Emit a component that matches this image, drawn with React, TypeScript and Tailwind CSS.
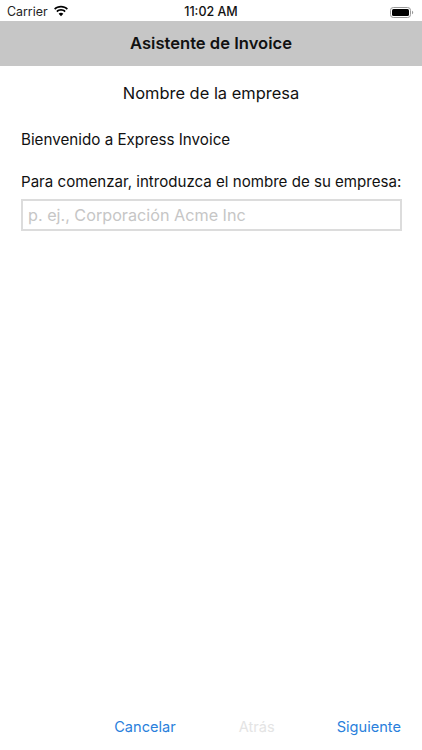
export default function App() {
  return (
    <div className="w-[422px] h-[750px] bg-white flex flex-col overflow-hidden text-black font-['Inter','Liberation_Sans',sans-serif]">
      <div className="h-[21px] pt-[3px] flex items-center justify-between pl-[7px] pr-[8px] relative">
        <div className="flex items-center gap-[5px]">
          <span className="text-[12.4px] leading-none text-[#222]">Carrier</span>
          <svg width="16" height="12" viewBox="0 0 15 11" className="mb-[3px]">
            <path d="M7.5 2.2c2.1 0 4 .8 5.4 2.1l1.1-1.2C12.3 1.500 10 .5 7.500 .5S2.700 1.500 1 3.100l1.100 1.200C3.500 3 5.400 2.200 7.500 2.200z" fill="#000" />
            <path d="M7.500 5.300c1.300 0 2.400.5 3.300 1.300l1.100-1.200C10.700 4.300 9.200 3.600 7.500 3.600S4.300 4.300 3.100 5.400l1.100 1.200c.9-.8 2-1.300 3.300-1.300z" fill="#000" />
            <path d="M7.500 10.500L9.700 8.100c-.6-.5-1.400-.9-2.200-.9s-1.600.3-2.200.9z" fill="#000" />
          </svg>
        </div>
        <span className="absolute left-0 right-0 text-center text-[12.5px] leading-none font-medium text-[#111]">11:02 AM</span>
        <svg width="24" height="11" viewBox="0 0 24 11">
          <rect x="0.500" y="0.500" width="20" height="10" rx="2.800" fill="none" stroke="#999" />
          <rect x="2" y="2" width="17" height="7" rx="1.500" fill="#000" />
          <path d="M22 3.800c.7.200 1.200.9 1.200 1.700s-.5 1.500-1.200 1.700z" fill="#999" />
        </svg>
      </div>
      <div className="h-[45px] bg-[#c6c6c6] flex items-center justify-center text-[16.6px] font-semibold text-[#111]">
        Asistente de Invoice
      </div>
      <div className="flex-1 flex flex-col px-[21px]">
        <div className="mt-[15px] text-center text-[16.45px] leading-[24px] text-[#111]">Nombre de la empresa</div>
        <div className="mt-[23px] text-[15.2px] leading-[24px] text-[#111]">Bienvenido a Express Invoice</div>
        <div className="mt-[18px] text-[15.1px] leading-[24px] text-[#111] whitespace-nowrap">Para comenzar, introduzca el nombre de su empresa:</div>
        <div className="mt-[5px] h-[32px] w-[381px] border-2 border-[#dcdcdc] flex items-center pl-[5px] text-[16.2px] text-[#c6c6c6]">
          p. ej., Corporación Acme Inc
        </div>
        <div className="flex-1" />
        <div className="h-[46px] pt-[1px] flex items-center justify-end text-[14.6px]">
          <span className="text-[#2a7fdc]">Cancelar</span>
          <span className="ml-[63px] text-[#e4e4e4]">Atrás</span>
          <span className="ml-[62px] text-[#2a7fdc]">Siguiente</span>
        </div>
      </div>
    </div>
  );
}
